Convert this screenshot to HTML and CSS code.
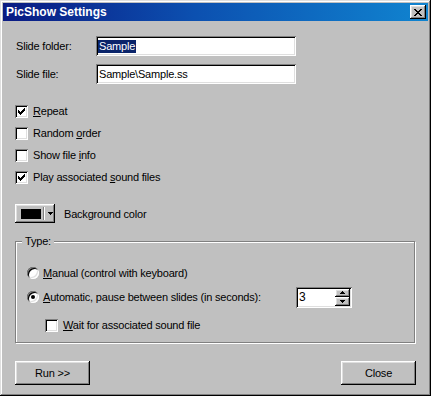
FILE: index.html
```html
<!DOCTYPE html>
<html lang="en">
<head>
    <meta charset="UTF-8">
    <title>PicShow Settings</title>
    <link rel="stylesheet" href="styles.css">
</head>
<body>
    <div class="window">
        <div class="titlebar">
            <span class="title">PicShow Settings</span>
            <span class="close-x">
                <svg width="8" height="7" viewBox="0 0 8 7" shape-rendering="crispEdges"><path d="M0 0h2v1h-2z M6 0h2v1h-2z M1 1h2v1h-2z M5 1h2v1h-2z M2 2h4v1h-4z M3 3h2v1h-2z M2 4h4v1h-4z M1 5h2v1h-2z M5 5h2v1h-2z M0 6h2v1h-2z M6 6h2v1h-2z" fill="#000"/></svg>
            </span>
        </div>

        <div class="content">
            <div class="field">
                <label>Slide folder:</label>
                <div class="edit"><span class="sel">Sample</span></div>
            </div>
            <div class="field">
                <label>Slide file:</label>
                <div class="edit"><span class="txt">Sample\Sample.ss</span></div>
            </div>

            <div class="checks">
                <div class="check-row">
                    <span class="box checked"><svg width="13" height="13" viewBox="0 0 13 13" shape-rendering="crispEdges"><path d="M3 5h1v3h-1z M4 6h1v3h-1z M5 7h1v3h-1z M6 6h1v3h-1z M7 5h1v3h-1z M8 4h1v3h-1z M9 3h1v3h-1z" fill="#000"/></svg></span>
                    <span class="lbl"><u>R</u>epeat</span>
                </div>
                <div class="check-row">
                    <span class="box"></span>
                    <span class="lbl">Random <u>o</u>rder</span>
                </div>
                <div class="check-row">
                    <span class="box"></span>
                    <span class="lbl">Show file <u>i</u>nfo</span>
                </div>
                <div class="check-row">
                    <span class="box checked"><svg width="13" height="13" viewBox="0 0 13 13" shape-rendering="crispEdges"><path d="M3 5h1v3h-1z M4 6h1v3h-1z M5 7h1v3h-1z M6 6h1v3h-1z M7 5h1v3h-1z M8 4h1v3h-1z M9 3h1v3h-1z" fill="#000"/></svg></span>
                    <span class="lbl">Play associated <u>s</u>ound files</span>
                </div>
            </div>

            <div class="color-row">
                <span class="color-btn">
                    <span class="swatch"></span>
                    <span class="sep"></span>
                    <svg width="5" height="3" viewBox="0 0 5 3" shape-rendering="crispEdges"><path d="M0 0h5v1h-5z M1 1h3v1h-3z M2 2h1v1h-1z" fill="#000"/></svg>
                </span>
                <span class="color-lbl">Background color</span>
            </div>

            <fieldset class="group">
                <legend>Type:</legend>
                <div class="group-body">
                    <div class="opt-row">
                        <span class="radio"></span>
                        <span class="lbl"><u>M</u>anual (control with keyboard)</span>
                    </div>
                    <div class="opt-row">
                        <span class="radio on"></span>
                        <span class="lbl wide"><u>A</u>utomatic, pause between slides (in seconds):</span>
                        <span class="spin">
                            <span class="spin-txt">3</span>
                            <span class="spin-btns">
                                <span class="spin-btn"><svg width="5" height="3" viewBox="0 0 5 3" shape-rendering="crispEdges"><path d="M2 0h1v1h-1z M1 1h3v1h-3z M0 2h5v1h-5z" fill="#000"/></svg></span>
                                <span class="spin-btn"><svg width="5" height="3" viewBox="0 0 5 3" shape-rendering="crispEdges"><path d="M0 0h5v1h-5z M1 1h3v1h-3z M2 2h1v1h-1z" fill="#000"/></svg></span>
                            </span>
                        </span>
                    </div>
                    <div class="opt-row sub">
                        <span class="box"></span>
                        <span class="lbl"><u>W</u>ait for associated sound file</span>
                    </div>
                </div>
            </fieldset>

            <div class="buttons">
                <button type="button">Run &gt;&gt;</button>
                <button type="button">Close</button>
            </div>
        </div>
    </div>
</body>
</html>
```

FILE: styles.css
```css
* { box-sizing: border-box; }
html, body { margin: 0; padding: 0; }
body {
    font-family: "Liberation Sans", Arial, sans-serif;
    font-size: 11px;
    letter-spacing: -0.2px;
    color: #000;
    background: #c0c0c0;
}
.window {
    width: 431px;
    height: 396px;
    padding: 3px;
    background: #c0c0c0;
    box-shadow: inset -1px -1px #000, inset 1px 1px #dfdfdf, inset -2px -2px #808080, inset 2px 2px #fff;
}
.titlebar {
    height: 18px;
    display: flex;
    align-items: center;
    justify-content: space-between;
    padding: 0 2px 0 3px;
    background: linear-gradient(to right, #0a1a82, #0c50b0 45%, #1084d0);
    color: #fff;
}
.title {
    font-weight: bold;
    font-size: 12px;
    letter-spacing: 0;
}
.close-x {
    width: 16px;
    height: 14px;
    display: flex;
    align-items: center;
    justify-content: center;
    background: #c0c0c0;
    box-shadow: inset -1px -1px #000, inset 1px 1px #fff, inset -2px -2px #808080, inset 2px 2px #dfdfdf;
}
.content {
    padding: 15px 12px 0 12px;
}

/* edit boxes */
.field {
    display: flex;
    align-items: center;
    height: 20px;
}
.field + .field { margin-top: 8px; }
.field label {
    width: 81px;
    padding-left: 1px;
}
.edit {
    width: 200px;
    height: 20px;
    display: flex;
    align-items: center;
    padding-left: 2px;
    background: #fff;
    box-shadow: inset 1px 1px #808080, inset -1px -1px #fff, inset 2px 2px #000, inset -2px -2px #dfdfdf;
}
.sel {
    background: #0a246a;
    color: #fff;
    line-height: 13px;
    padding: 0 1px;
}
.txt { padding-left: 1px; }

/* checkboxes */
.checks { margin-top: 16px; }
.check-row {
    height: 22px;
    display: flex;
    align-items: center;
}
.box {
    width: 13px;
    height: 13px;
    flex: 0 0 13px;
    background: #fff;
    box-shadow: inset 1px 1px #808080, inset -1px -1px #fff, inset 2px 2px #000, inset -2px -2px #dfdfdf;
}
.box svg { display: block; }
.lbl { margin-left: 5px; white-space: nowrap; }

/* color picker */
.color-row {
    margin-top: 16px;
    height: 19px;
    display: flex;
    align-items: center;
}
.color-btn {
    width: 40px;
    height: 19px;
    display: flex;
    align-items: center;
    padding-left: 6px;
    box-shadow: inset -1px -1px #000, inset 1px 1px #fff, inset -2px -2px #808080, inset 2px 2px #dfdfdf;
}
.swatch {
    width: 20px;
    height: 10px;
    background: #000;
}
.sep {
    width: 2px;
    height: 13px;
    margin: 0 3px 0 2px;
    border-left: 1px solid #808080;
    border-right: 1px solid #fff;
}
.color-btn svg { display: block; }
.color-lbl { margin-left: 9px; }

/* group box */
.group {
    margin: 12px 0 0;
    padding: 0 0 0 6px;
    width: 400px;
    border: 1px solid #808080;
    box-shadow: inset 1px 1px #fff, 1px 1px #fff;
}
.group legend {
    padding: 0 3px;
    line-height: 13px;
    background: #c0c0c0;
}
.group-body {
    padding: 13px 0 5px 5px;
}
.opt-row {
    height: 24px;
    display: flex;
    align-items: center;
}
.opt-row.sub {
    margin-top: 4px;
    padding-left: 18px;
}
.radio {
    position: relative;
    width: 12px;
    height: 12px;
    flex: 0 0 12px;
    border-radius: 50%;
    background: #fff;
    box-shadow: inset 1px 1px #808080, inset -1px -1px #fff, inset 2px 2px #000, inset -2px -2px #dfdfdf;
}
.radio.on::after {
    content: "";
    position: absolute;
    left: 4px;
    top: 4px;
    width: 4px;
    height: 4px;
    border-radius: 50%;
    background: #000;
}
.opt-row .radio + .lbl { margin-left: 4px; }
.lbl.wide { flex: 0 0 253px; }

/* spinner */
.spin {
    width: 56px;
    height: 21px;
    display: flex;
    padding: 2px;
    background: #fff;
    box-shadow: inset 1px 1px #808080, inset -1px -1px #fff, inset 2px 2px #000, inset -2px -2px #dfdfdf;
}
.spin-txt {
    flex: 1;
    padding-left: 1px;
    font-size: 12px;
    line-height: 17px;
}
.spin-btns {
    width: 15px;
    display: flex;
    flex-direction: column;
}
.spin-btn {
    flex: 1;
    display: flex;
    align-items: center;
    justify-content: center;
    background: #c0c0c0;
    box-shadow: inset -1px -1px #000, inset 1px 1px #fff, inset -2px -2px #808080, inset 2px 2px #dfdfdf;
}
.spin-btn svg { display: block; }

/* bottom buttons */
.buttons {
    margin-top: 18px;
    display: flex;
    justify-content: space-between;
}
button {
    width: 75px;
    height: 24px;
    padding: 0;
    border: none;
    font-family: inherit;
    font-size: 11px;
    letter-spacing: inherit;
    color: #000;
    background: #c0c0c0;
    box-shadow: inset -1px -1px #000, inset 1px 1px #fff, inset -2px -2px #808080, inset 2px 2px #dfdfdf;
}
```
